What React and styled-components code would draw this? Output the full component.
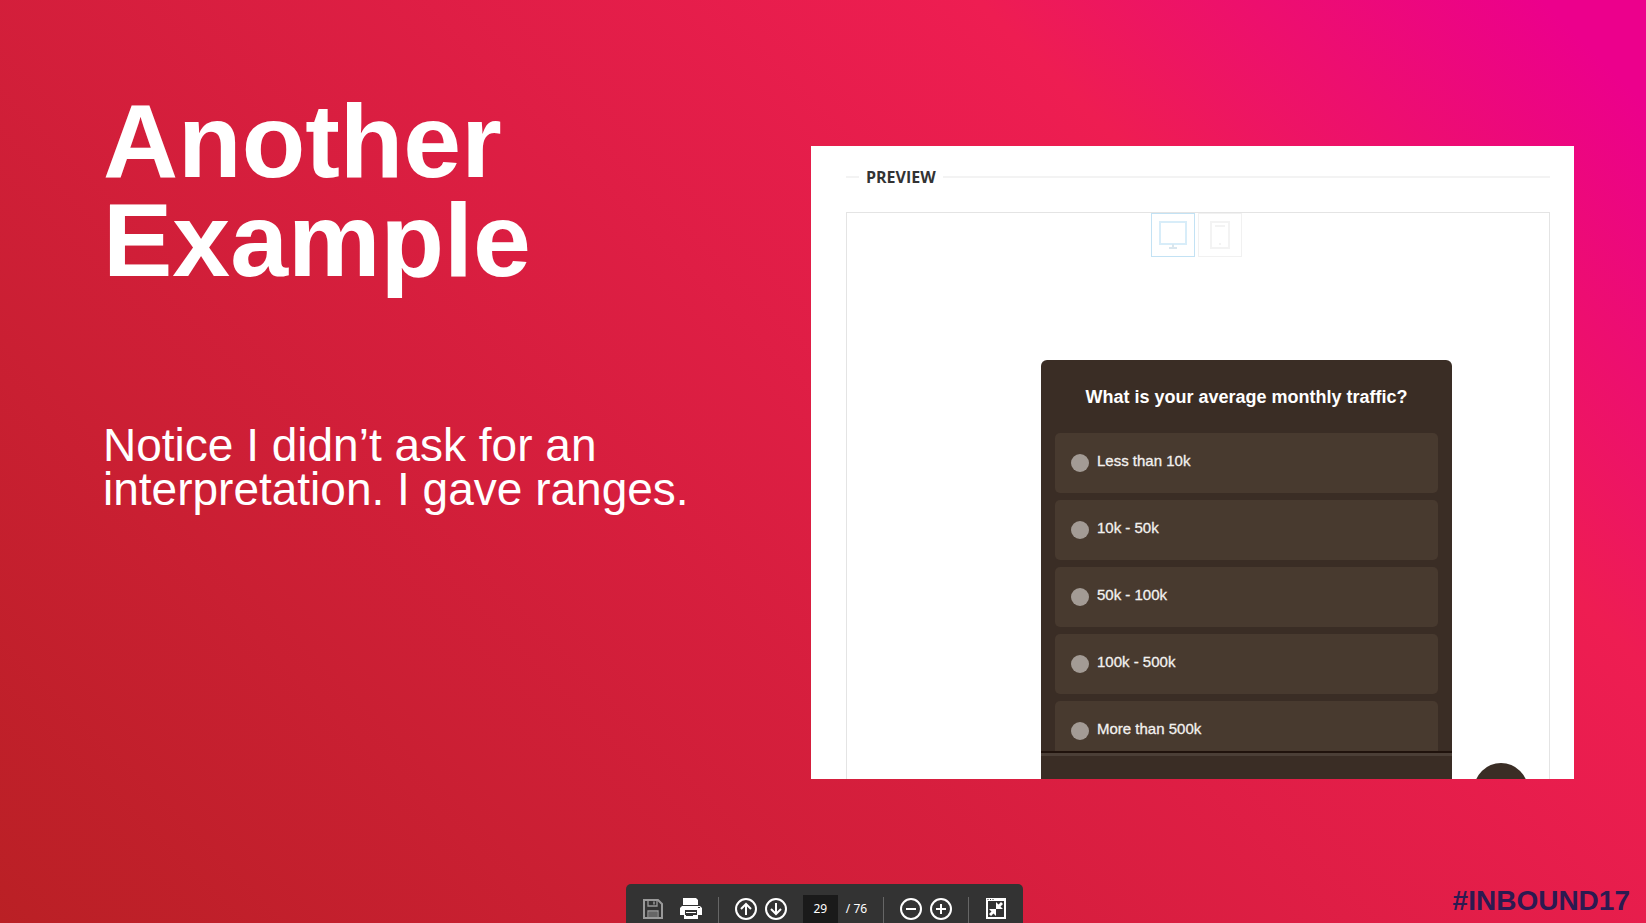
import React from "react";
import styled, { createGlobalStyle } from "styled-components";

const GlobalStyle = createGlobalStyle`
  *, *::before, *::after { box-sizing: border-box; }
  body {
    margin: 0;
    font-family: "Liberation Sans", Arial, sans-serif;
  }
  h1, h2, p { margin: 0; }
`;

const Slide = styled.main`
  position: relative;
  min-height: 100vh;
  overflow: hidden;
  display: flex;
  flex-direction: column;
  justify-content: space-between;
  color: #fff;
  background: linear-gradient(45deg, #ba2025 0%, #ee1d52 74%, #ec008c 96%);
`;

const Columns = styled.div`
  display: grid;
  grid-template-columns: 708fr 763fr;
  align-items: start;
  padding: 84px 72px 0 103px;
`;

const Intro = styled.div`
  display: flex;
  flex-direction: column;
  gap: 133px;
  padding-top: 8px;
`;

const Heading = styled.h1`
  max-width: 500px;
  font-size: 104px;
  line-height: 99px;
  font-weight: 700;
`;

const Statement = styled.p`
  max-width: 620px;
  font-size: 46px;
  line-height: 44px;
`;

const Preview = styled.section`
  display: flex;
  flex-direction: column;
  height: 633px;
  margin-top: 62px;
  padding: 19px 24px 0 35px;
  overflow: hidden;
  background: #fff;
`;

const PreviewHeader = styled.header`
  display: flex;
  align-items: center;
  gap: 7px;
  height: 24px;

  &::before, &::after {
    content: "";
    height: 2px;
    background: #f3f3f3;
  }
  &::before { width: 13px; }
  &::after { flex: 1; }
`;

const PreviewTitle = styled.h2`
  color: #333;
  font: 700 16px/22px "Open Sans", sans-serif;
`;

const Stage = styled.div`
  flex: 1;
  min-height: 0;
  margin-top: 23px;
  overflow: hidden;
  border: 1px solid #e4e4e4;
  border-width: 1px 1px 0;
`;

const Devices = styled.div`
  display: flex;
  justify-content: center;
  gap: 3px;
  margin-right: 4px;
`;

const DeviceButton = styled.button`
  display: grid;
  place-items: center;
  width: 44px;
  height: 44px;
  padding: 0;
  color: ${(p) => (p.$active ? "#d8edf9" : "#f3f3f3")};
  background: #fff;
  border: 1px solid ${(p) => (p.$active ? "#c3e2f4" : "#f1f1f1")};
`;

const Widgets = styled.div`
  display: flex;
  justify-content: flex-end;
  align-items: flex-end;
  gap: 22px;
  margin: 103px 21px 0 0;
`;

const Survey = styled.form`
  flex: 0 1 411px;
  height: 420px;
  overflow: hidden;
  background: #3a2d25;
  border-radius: 6px 6px 0 0;
`;

const Options = styled.fieldset`
  display: flex;
  flex-direction: column;
  gap: 7px;
  height: 391px;
  min-width: 0;
  margin: 0;
  padding: 0 14px;
  border: 0;
  overflow: hidden;
`;

const Question = styled.legend`
  width: 100%;
  padding: 26px 0 25px;
  text-align: center;
  font-size: 18px;
  line-height: 22px;
  font-weight: 700;
`;

const Option = styled.label`
  flex: none;
  display: flex;
  align-items: flex-start;
  gap: 8px;
  height: 60px;
  padding: 18px 16px;
  font-size: 15px;
  line-height: 20px;
  color: #f3f1ef;
  background: #483a2f;
  border-radius: 5px;
  -webkit-text-stroke: 0.3px currentColor;
`;

const Radio = styled.input`
  appearance: none;
  width: 18px;
  height: 18px;
  margin: 3px 0 0;
  border-radius: 50%;
  background: #a39b95;
`;

const SurveyFooter = styled.footer`
  height: 29px;
  border-top: 2px solid #20130d;
  box-shadow: inset 0 3px #4b3f37;
`;

const Launcher = styled.button`
  flex: none;
  width: 54px;
  height: 54px;
  margin-bottom: -37px;
  padding: 0;
  border: 0;
  border-radius: 50%;
  background: #3a2d25;
`;

const Hashtag = styled.p`
  align-self: flex-end;
  padding: 0 16px 6px 0;
  font-size: 28px;
  line-height: 32px;
  font-weight: 700;
  color: #2c1a51;
`;

const ToolbarDock = styled.div`
  position: absolute;
  inset: auto 0 0 0;
  display: flex;
  justify-content: center;
  padding-left: 3px;
`;

const Toolbar = styled.nav`
  display: flex;
  align-items: flex-end;
  height: 39px;
  padding: 0 16px;
  border-radius: 5px 5px 0 0;
  background: #333;
  font: 12px/28px "Noto Sans", "Open Sans", sans-serif;
`;

const ToolGroup = styled.div`
  display: flex;
  align-items: center;
  gap: 8px;
  height: 28px;
`;

const FileTools = styled(ToolGroup)`
  gap: 16px;
`;

const PageTools = styled(ToolGroup)`
  margin-left: 16px;
`;

const ToolButton = styled.button`
  display: block;
  width: 22px;
  height: 22px;
  padding: 0;
  border: 0;
  background: none;
  color: ${(p) => (p.disabled ? "#9a9a9a" : "#fff")};

  svg { display: block; }
`;

const Divider = styled.span`
  width: 1px;
  height: 26px;
  margin: 0 16px;
  background: #666;
`;

const PageInput = styled.input`
  width: 35px;
  height: 28px;
  padding: 0;
  border: 0;
  background: #1a1a1a;
  color: #fff;
  font: inherit;
  text-align: center;
`;

const PageCount = styled.span`
  white-space: nowrap;
`;

const DesktopIcon = () => (
  <svg width="28" height="28" viewBox="0 0 28 28" fill="none" stroke="currentColor">
    <path d="M1 1h26v22H1z" strokeWidth="2" />
    <path d="M14 23v4M10 27h8" strokeWidth="2" stroke="#d9e6ee" />
  </svg>
);

const TabletIcon = () => (
  <svg width="20" height="28" viewBox="0 0 20 28" fill="none" stroke="currentColor">
    <path d="M1 1h18v26H1zM5 5h10M9 23h2" strokeWidth="2" />
  </svg>
);

const SaveIcon = () => (
  <svg width="22" height="22" viewBox="0 0 22 22" fill="none" stroke="currentColor" strokeWidth="2">
    <path d="M2 2h14l4 4v14H2z" />
    <path d="M6 2v6h9V2M6 20v-7h10v7" strokeWidth="1.3" />
    <path d="M12 3.500v3" strokeWidth="1.5" />
    <path d="M7 14h8v5H7z" fill="#666" stroke="none" />
  </svg>
);

const PrintIcon = () => (
  <svg width="22" height="22" viewBox="0 0 22 22">
    <path fill="currentColor" d="M3 0h13l2 2v5H3zM2 8h18l2 2v7h-4v4H4v-4H0v-7z" />
    <path fill="#333" d="M5 12h12v5H5z" />
    <path fill="currentColor" d="M6 14h10v1H6z" />
    <path fill="#333" d="M6 17h7v1H6zM18 9h2v1h-2z" />
  </svg>
);

const CircleIcon = ({ d }) => (
  <svg width="22" height="22" viewBox="0 0 22 22" fill="none" stroke="currentColor" strokeWidth="2">
    <circle cx="11" cy="11" r="10" />
    <path d={d} />
  </svg>
);

const FitIcon = () => (
  <svg width="22" height="22" viewBox="0 0 22 22">
    <path fill="currentColor" fillRule="evenodd" d="M1 0h20v21H1zM3 3v16h16V3z" />
    <path fill="#333" d="M2.500 1h1v1h-1zM5 1h1v1H5zM7.500 1h1v1h-1z" />
    <path fill="currentColor" d="M11 4v7h7l-2.500-2.500L18 6l-2-2-2.500 2.500zM11 18v-7H4l2.500 2.500L4 16l2 2 2.500-2.500z" />
  </svg>
);

const RANGES = ["Less than 10k", "10k - 50k", "50k - 100k", "100k - 500k", "More than 500k"];

export default function App() {
  return (
    <>
      <GlobalStyle />
      <Slide>
        <Columns>
          <Intro>
            <Heading>Another Example</Heading>
            <Statement>Notice I didn’t ask for an interpretation. I gave ranges.</Statement>
          </Intro>
          <Preview>
            <PreviewHeader>
              <PreviewTitle>PREVIEW</PreviewTitle>
            </PreviewHeader>
            <Stage>
              <Devices>
                <DeviceButton type="button" $active aria-label="Desktop"><DesktopIcon /></DeviceButton>
                <DeviceButton type="button" aria-label="Tablet"><TabletIcon /></DeviceButton>
              </Devices>
              <Widgets>
                <Survey>
                  <Options>
                    <Question>What is your average monthly traffic?</Question>
                    {RANGES.map((range) => (
                      <Option key={range}>
                        <Radio type="radio" name="traffic" value={range} />
                        {range}
                      </Option>
                    ))}
                  </Options>
                  <SurveyFooter />
                </Survey>
                <Launcher type="button" aria-label="Open chat" />
              </Widgets>
            </Stage>
          </Preview>
        </Columns>
        <Hashtag>#INBOUND17</Hashtag>
        <ToolbarDock>
          <Toolbar aria-label="Document">
            <FileTools>
              <ToolButton type="button" disabled aria-label="Save"><SaveIcon /></ToolButton>
              <ToolButton type="button" aria-label="Print"><PrintIcon /></ToolButton>
            </FileTools>
            <Divider />
            <ToolGroup>
              <ToolButton type="button" aria-label="Previous page"><CircleIcon d="M11 17V6M6 11l5-5 5 5" /></ToolButton>
              <ToolButton type="button" aria-label="Next page"><CircleIcon d="M11 5v11M6 11l5 5 5-5" /></ToolButton>
            </ToolGroup>
            <PageTools>
              <PageInput aria-label="Page number" defaultValue="29" />
              <PageCount>/ 76</PageCount>
            </PageTools>
            <Divider />
            <ToolGroup>
              <ToolButton type="button" aria-label="Zoom out"><CircleIcon d="M6 11h10" /></ToolButton>
              <ToolButton type="button" aria-label="Zoom in"><CircleIcon d="M6 11h10M11 6v10" /></ToolButton>
            </ToolGroup>
            <Divider />
            <ToolGroup>
              <ToolButton type="button" aria-label="Fit page"><FitIcon /></ToolButton>
            </ToolGroup>
          </Toolbar>
        </ToolbarDock>
      </Slide>
    </>
  );
}
